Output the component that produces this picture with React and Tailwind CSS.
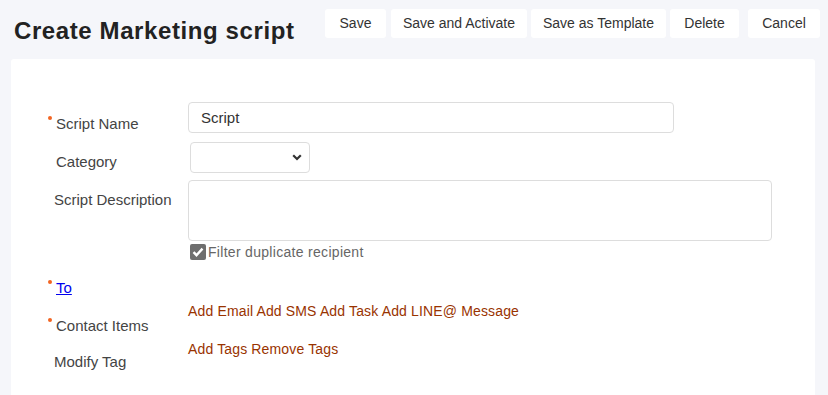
export default function App() {
  const font = { fontFamily: '"Liberation Sans", Arial, sans-serif' };
  const Dot = () => (
    <span className="absolute -left-[8px] top-[1px] h-[4px] w-[4px] rounded-full bg-[#f26522]" />
  );
  return (
    <div className="min-h-[395px] w-[828px] bg-[#f5f6fa] overflow-hidden" style={font}>
      {/* header */}
      <div className="flex items-start justify-between pl-[14px] pr-[8px] pt-[9px]">
        <h1 className="mt-[8px] text-[24px] font-bold leading-[28px] text-[#222] tracking-[0.6px]">
          Create Marketing script
        </h1>
        <div className="flex">
          <button className="h-[29px] w-[61px] rounded-[3px] bg-white text-[14px] text-[#333]">Save</button>
          <button className="ml-[5px] h-[29px] w-[136px] rounded-[3px] bg-white text-[14px] text-[#333]">Save and Activate</button>
          <button className="ml-[4px] h-[29px] w-[135px] rounded-[3px] bg-white text-[14px] text-[#333]">Save as Template</button>
          <button className="ml-[4px] h-[29px] w-[69px] rounded-[3px] bg-white text-[14px] text-[#333]">Delete</button>
          <button className="ml-[9px] h-[29px] w-[72px] rounded-[3px] bg-white text-[14px] text-[#333]">Cancel</button>
        </div>
      </div>

      {/* card */}
      <div className="ml-[11px] mt-[14px] w-[804px] min-h-[340px] rounded-t-[3px] bg-white pt-[43px] pl-[43px]">
        {/* Script Name */}
        <div className="flex items-start">
          <div className="w-[134px] pl-[2px] pt-[13px] leading-[18px]">
            <span className="relative text-[15px] leading-[18px] text-[#444]">
              <Dot />Script Name
            </span>
          </div>
          <input
            defaultValue="Script"
            className="h-[31px] w-[486px] rounded-[4px] border border-[#ddd] px-[12px] text-[15px] text-[#333] outline-none"
          />
        </div>

        {/* Category */}
        <div className="mt-[9px] flex items-start">
          <div className="w-[134px] pl-[2px] pt-[11px] text-[15px] leading-[18px] text-[#444]">Category</div>
          <div className="relative ml-[2px] h-[31px] w-[120px] rounded-[4px] border border-[#ddd] bg-white">
            <svg className="absolute right-[7px] top-[11px]" width="10" height="7" viewBox="0 0 10 7">
              <path d="M1.2 1.2 L5 5 L8.8 1.2" fill="none" stroke="#333" strokeWidth="2.2" />
            </svg>
          </div>
        </div>

        {/* Description */}
        <div className="mt-[7px] flex items-start">
          <div className="w-[134px] pt-[11px] text-[15px] leading-[18px] text-[#444]">Script Description</div>
          <div className="h-[61px] w-[584px] rounded-[4px] border border-[#ddd]" />
        </div>

        {/* Checkbox */}
        <div className="mt-[2px] flex items-center pl-[136px] leading-[18px]">
          <span className="flex h-[16px] w-[16px] items-center justify-center rounded-[2px] bg-[#6e6e6e]">
            <svg width="12" height="10" viewBox="0 0 12 10">
              <path d="M1.5 5.2 L4.5 8.2 L10.5 1.6" fill="none" stroke="#fff" strokeWidth="2.4" />
            </svg>
          </span>
          <span className="ml-[2px] text-[14px] leading-[18px] tracking-[0.3px] text-[#666]">Filter duplicate recipient</span>
        </div>

        {/* To */}
        <div className="mt-[18px] pl-[2px] leading-[18px]">
          <span className="relative text-[15px] leading-[18px] text-[#0000ee] underline">
            <Dot />To
          </span>
        </div>

        {/* Contact Items */}
        <div className="mt-[5px] flex items-start">
          <div className="w-[134px] pl-[2px] pt-[15px] leading-[18px]">
            <span className="relative text-[15px] leading-[18px] text-[#444]">
              <Dot />Contact Items
            </span>
          </div>
          <div className="text-[14px] leading-[18px] tracking-[0.15px] text-[#993300]">
            Add Email Add SMS Add Task Add LINE@ Message
          </div>
        </div>

        {/* Modify Tag */}
        <div className="mt-[5px] flex items-start">
          <div className="w-[134px] pt-[13px] text-[15px] leading-[18px] text-[#444]">Modify Tag</div>
          <div className="text-[14px] leading-[18px] tracking-[0.15px] text-[#993300]">Add Tags Remove Tags</div>
        </div>
      </div>
    </div>
  );
}
